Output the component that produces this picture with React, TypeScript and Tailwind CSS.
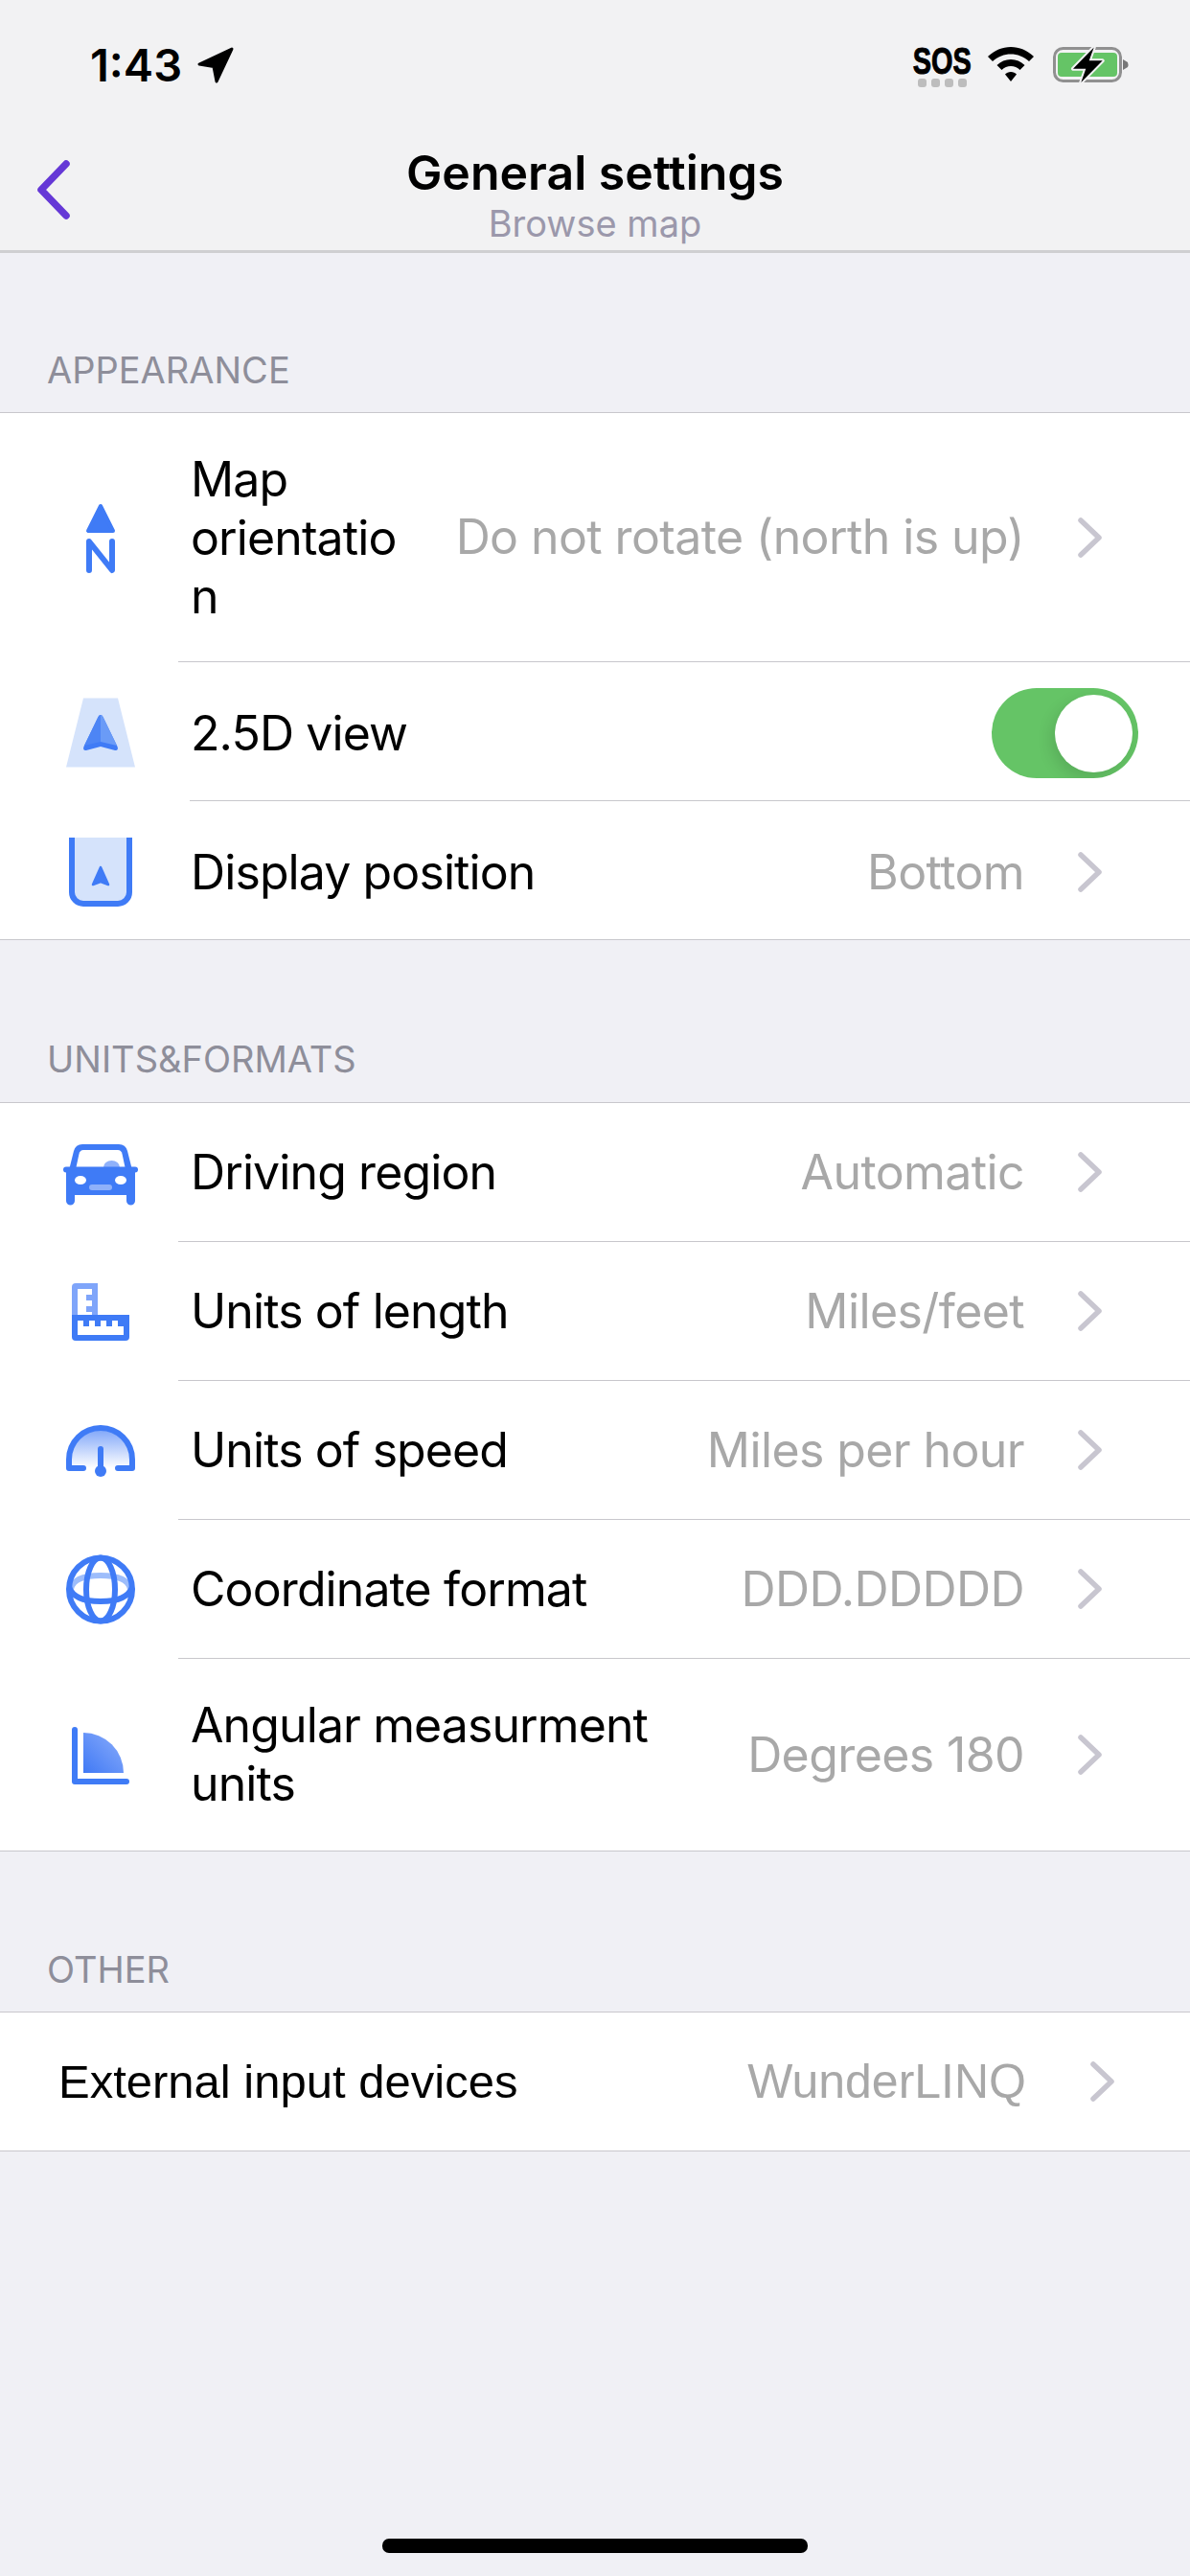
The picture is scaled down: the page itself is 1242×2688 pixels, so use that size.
import React from 'react';

const BLUE = '#3f7bf6';

function LocationArrow() {
  return (
    <svg width="40" height="38" viewBox="0 0 40 38">
      <path d="M37 2 L3 18 L18 20.500 L21 36 Z" fill="#000" stroke="#000" strokeWidth="3" strokeLinejoin="round" />
    </svg>
  );
}

function WifiIcon() {
  return (
    <svg width="48" height="36" viewBox="0 0 48 36">
      <path d="M24 0 C15 0 7 3.500 0 10 L5 15 C10.500 10 17 7.500 24 7.500 C31 7.500 37.500 10 43 15 L48 10 C41 3.500 33 0 24 0 Z" fill="#000" />
      <path d="M24 13 C18.500 13 13.500 15 9.500 19 L14.500 24 C17 21.500 20.500 20 24 20 C27.500 20 31 21.500 33.500 24 L38.500 19 C34.500 15 29.500 13 24 13 Z" fill="#000" />
      <path d="M24 26 C21.500 26 19.500 27 18 28.500 L24 36 L30 28.500 C28.500 27 26.500 26 24 26 Z" fill="#000" />
    </svg>
  );
}

function BatteryIcon() {
  return (
    <svg width="79" height="38" viewBox="0 0 79 38">
      <rect x="1.500" y="1.500" width="69" height="34" rx="9" fill="none" stroke="#909090" strokeWidth="3" />
      <rect x="5" y="6" width="62" height="25" rx="4" fill="#65c466" />
      <path d="M73 13 L78 16 Q79 18.500 78 21 L73 24 Z" fill="#777" />
      <path d="M42.700 0.500 L21 22.700 H34.300 L29.300 37 L51.700 14.300 H37.700 Z" fill="#000" stroke="#f2f2f3" strokeWidth="4" strokeLinejoin="round" paintOrder="stroke" />
    </svg>
  );
}

function NorthIcon() {
  return (
    <svg width="84" height="84" viewBox="0 0 84 84">
      <path d="M42 9 L29 35 H55 Z" fill={BLUE} stroke={BLUE} strokeWidth="4" strokeLinejoin="round" />
      <path d="M30 76 V46 L54 76 V46" fill="none" stroke={BLUE} strokeWidth="6" strokeLinecap="round" strokeLinejoin="round" />
    </svg>
  );
}

function PerspectiveIcon() {
  return (
    <svg width="84" height="84" viewBox="0 0 84 84">
      <path d="M24 7.500 H60 L78 79.500 H6 Z" fill="#d5e3fb" />
      <path d="M42 25 Q43.500 25 44.500 27 L59.500 58 Q61 62 57 62 L42 58 L27 62 Q23 62 24.500 58 L39.500 27 Q40.500 25 42 25 Z" fill={BLUE} />
      <path d="M42 25 Q40.500 25 39.500 27 L25 57 L42 53 Z" fill="#4d85f5" />
      <path d="M42 25 Q43.500 25 44.500 27 L59 57 L42 53 Z" fill="#6a9bf7" />
    </svg>
  );
}

function PositionIcon() {
  return (
    <svg width="84" height="84" viewBox="0 0 84 84">
      <path d="M12 8 V65 A12 12 0 0 0 24 77 H60 A12 12 0 0 0 72 65 V8" fill="#d5e3fb" stroke={BLUE} strokeWidth="6" />
      <path d="M42 39 L34 57 L42 54 L50 57 Z" fill={BLUE} stroke={BLUE} strokeWidth="2.500" strokeLinejoin="round" />
    </svg>
  );
}

function CarIcon() {
  return (
    <svg width="84" height="84" viewBox="0 0 84 84">
      <path d="M9.500 38 L14 20 Q16 13 23 13 H61 Q68 13 70 20 L74.500 38 Z" fill={BLUE} />
      <path d="M16.500 37 L19.500 23 Q20.500 19 24 19 H60 Q63.500 19 64.500 23 L67.500 37 Z" fill="#fff" />
      <path d="M45 37 A8.500 7 0 0 1 62 37 Z" fill="#8fb1fa" />
      <rect x="3" y="36.500" width="78" height="6" rx="3" fill={BLUE} />
      <path d="M6 37 H78 V72 A4.500 4.500 0 0 1 69 72 V66 H15 V72 A4.500 4.500 0 0 1 6 72 Z" fill={BLUE} />
      <ellipse cx="21" cy="50.500" rx="6" ry="4.500" fill="#fff" />
      <ellipse cx="63" cy="50.500" rx="6" ry="4.500" fill="#fff" />
      <rect x="30" y="55" width="24" height="6" rx="3" fill="#8fb1fa" />
    </svg>
  );
}

function RulerIcon() {
  return (
    <svg width="84" height="84" viewBox="0 0 84 84">
      <path d="M12 46 V17 A4 4 0 0 1 16 13 H39 V46 Z" fill="#7fa5fa" />
      <path d="M18 19 H33 V25 H27 V31 H33 V37 H27 V43 H33 V46 H18 Z" fill="#fff" />
      <path d="M12 46 H72 V69 A4 4 0 0 1 68 73 H16 A4 4 0 0 1 12 69 Z" fill={BLUE} />
      <path d="M18 52 H24 V58 H30 V52 H36 V58 H42 V52 H48 V58 H54 V52 H60 V58 H66 V67 H18 Z" fill="#fff" />
    </svg>
  );
}

function GaugeIcon() {
  return (
    <svg width="84" height="84" viewBox="0 0 84 84">
      <defs>
        <linearGradient id="gauge-fill" x1="0" y1="0" x2="0" y2="1">
          <stop offset="0" stopColor="#7ba3f9" />
          <stop offset="1" stopColor="#fff" />
        </linearGradient>
      </defs>
      <path d="M9 61 V52 A33 33 0 0 1 75 52 V61 Z" fill="url(#gauge-fill)" />
      <path d="M24 61 H9 V52 A33 33 0 0 1 75 52 V61 H60" fill="none" stroke={BLUE} strokeWidth="6" strokeLinecap="round" strokeLinejoin="round" />
      <path d="M42 41 V62" stroke={BLUE} strokeWidth="6" strokeLinecap="round" />
      <circle cx="42" cy="64" r="6" fill={BLUE} />
    </svg>
  );
}

function GlobeIcon() {
  return (
    <svg width="84" height="84" viewBox="0 0 84 84">
      <path d="M11 42 Q14 28 42 28 Q70 28 73 42" fill="none" stroke="#9dbdfb" strokeWidth="6" />
      <circle cx="42" cy="42.500" r="33" fill="none" stroke={BLUE} strokeWidth="6" />
      <ellipse cx="42" cy="42.500" rx="15" ry="33" fill="none" stroke={BLUE} strokeWidth="6" />
      <path d="M9 40 Q14 55 42 55 Q70 55 75 40" fill="none" stroke={BLUE} strokeWidth="6" />
    </svg>
  );
}

function AngleIcon() {
  return (
    <svg width="84" height="84" viewBox="0 0 84 84">
      <defs>
        <linearGradient id="angle-fill" x1="0" y1="1" x2="1" y2="0">
          <stop offset="0" stopColor="#4079f5" />
          <stop offset="1" stopColor="#8caefb" />
        </linearGradient>
      </defs>
      <path d="M24 19 A42 42 0 0 1 66 61 H24 Z" fill="url(#angle-fill)" />
      <path d="M15 16 V70 H69" fill="none" stroke={BLUE} strokeWidth="6" strokeLinecap="round" strokeLinejoin="round" />
    </svg>
  );
}

function Chevron() {
  return (
    <svg width="26" height="42" viewBox="0 0 26 42" className="shrink-0">
      <path d="M3 3 L22 21 L3 39" fill="none" stroke="#c8c6d0" strokeWidth="5.500" strokeLinecap="round" strokeLinejoin="round" />
    </svg>
  );
}

interface RowProps {
  icon: React.ReactNode;
  label: string;
  value: string;
  labelClass?: string;
  inset?: boolean;
  first?: boolean;
}

function Row({ icon, label, value, labelClass = '', inset, first }: RowProps) {
  return (
    <div className="flex items-stretch">
      <div className="flex w-[186px] shrink-0 items-center pl-[63px]">{icon}</div>
      <div className={`flex flex-1 items-center pr-[91px] ${inset ? 'ml-[12px] pl-px pt-[4px]' : 'pl-[13px]'} ${first ? 'min-h-[144px]' : 'min-h-[145px] border-t border-[#c8c7cc]'}`}>
        <div className={`text-[50px] leading-[61px] tracking-[-0.9px] text-black ${labelClass}`}>{label}</div>
        <div className="ml-auto pl-4 pr-[56px] text-right text-[50px] leading-[61px] tracking-[-0.6px] whitespace-nowrap text-[#a8a8a8]">{value}</div>
        <Chevron />
      </div>
    </div>
  );
}

function SectionLabel({ title, className }: { title: string; className: string }) {
  return <div className={`pl-[49px] text-[38px] leading-[46px] text-[#8e8e9a] ${className}`}>{title}</div>;
}

export default function App() {
  return (
    <div className="relative flex h-[2688px] w-[1242px] flex-col overflow-hidden bg-[#f0f0f5] font-['Inter','Liberation_Sans',sans-serif]">
      <header className="h-[264px] shrink-0 border-b-[3px] border-[#cfcfd1] bg-[#f2f2f3]">
        <div className="flex h-[136px] items-start justify-between pt-[49px] pr-[64px] pl-[94px]">
          <div className="flex items-center gap-[15px]">
            <span className="text-[47px] leading-[38px] font-semibold text-black">1:43</span>
            <LocationArrow />
          </div>
          <div className="flex items-start">
            <div className="mr-[19px] flex w-[58px] flex-col items-center">
              <span className="scale-x-[0.74] font-['Liberation_Sans',sans-serif] text-[39px] leading-[30px] font-bold text-black [-webkit-text-stroke:1px_black]">SOS</span>
              <div className="mt-[3px] flex gap-[5px]">
                <span className="h-[9px] w-[9px] rounded-[3px] bg-[#bdbdbd]" />
                <span className="h-[9px] w-[9px] rounded-[3px] bg-[#bdbdbd]" />
                <span className="h-[9px] w-[9px] rounded-[3px] bg-[#bdbdbd]" />
                <span className="h-[9px] w-[9px] rounded-[3px] bg-[#bdbdbd]" />
              </div>
            </div>
            <WifiIcon />
            <div className="ml-[20px]">
              <BatteryIcon />
            </div>
          </div>
        </div>
        <div className="relative flex flex-col items-center pt-[14px]">
          <svg width="44" height="66" viewBox="0 0 44 66" className="absolute top-[29px] left-[33px]">
            <path d="M36 6 L10 33 L36 60" fill="none" stroke="#6538d6" strokeWidth="7.500" strokeLinecap="round" strokeLinejoin="round" />
          </svg>
          <div className="text-[50px] leading-[60px] font-semibold text-black">General settings</div>
          <div className="text-[38px] leading-[46px] text-[#9b98ab]">Browse map</div>
        </div>
      </header>

      <SectionLabel title="APPEARANCE" className="pt-[99px] pb-[21px]" />
      <section className="border-y border-[#c8c7cc] bg-white">
        <Row first icon={<NorthIcon />} label="Map orientation" value="Do not rotate (north is up)" labelClass="w-[225px] shrink-0 pt-[39px] pb-[37px] wrap-break-word" />
        <div className="flex items-stretch">
          <div className="flex w-[186px] shrink-0 items-center pl-[63px]">
            <PerspectiveIcon />
          </div>
          <div className="flex h-[145px] flex-1 items-center justify-between border-t border-[#c8c7cc] pt-[4px] pr-[54px] pl-[13px]">
            <span className="text-[50px] leading-[61px] tracking-[-0.9px] text-black">2.5D view</span>
            <div className="flex h-[94px] w-[153px] items-center justify-end overflow-hidden rounded-full bg-[#65c466] pr-[6px]">
              <div className="h-[81px] w-[81px] rounded-full bg-white shadow-[-4px_6px_16px_rgba(0,0,0,0.12)]" />
            </div>
          </div>
        </div>
        <Row inset icon={<PositionIcon />} label="Display position" value="Bottom" />
      </section>

      <SectionLabel title="UNITS&FORMATS" className="pt-[101px] pb-[22px]" />
      <section className="border-y border-[#c8c7cc] bg-white">
        <Row first icon={<CarIcon />} label="Driving region" value="Automatic" />
        <Row icon={<RulerIcon />} label="Units of length" value="Miles/feet" />
        <Row icon={<GaugeIcon />} label="Units of speed" value="Miles per hour" />
        <Row icon={<GlobeIcon />} label="Coordinate format" value="DDD.DDDDD" />
        <Row icon={<AngleIcon />} label="Angular measurment units" value="Degrees 180" labelClass="w-[490px] shrink-0 py-[39px]" />
      </section>

      <SectionLabel title="OTHER" className="pt-[100px] pb-[21px]" />
      <section className="border-y border-[#c8c7cc] bg-white">
        <div className="flex h-[144px] items-center pr-[78px] pl-[61px] font-['Liberation_Sans',sans-serif] text-[49px] leading-[61px]">
          <span className="text-black">External input devices</span>
          <span className="ml-auto pr-[67px] text-[50px] text-[#a8a8a8]">WunderLINQ</span>
          <Chevron />
        </div>
      </section>

      <div className="absolute bottom-[24px] left-[399px] h-[15px] w-[444px] rounded-[7px] bg-black" />
    </div>
  );
}
